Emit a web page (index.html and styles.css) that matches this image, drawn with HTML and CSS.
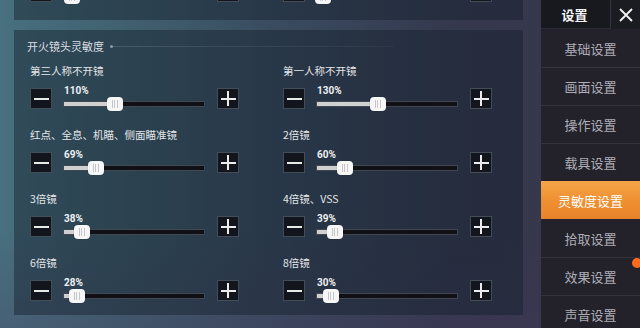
FILE: index.html
```html
<!DOCTYPE html>
<html lang="zh-CN">
<head>
<meta charset="utf-8">
<title>设置 - 灵敏度设置</title>
<link rel="stylesheet" href="styles.css">
</head>
<body>
<div class="screen">
  <main class="main">
    <section class="panel panel-prev">
      <div class="grid">
        <div class="cell">
          <div class="controls">
            <button class="btn"><span class="minus"></span></button>
            <div class="slider"><div class="track"><div class="fill" style="width:6%"></div><div class="thumb" style="left:6%"></div></div></div>
            <button class="btn"><span class="plus"></span></button>
          </div>
        </div>
        <div class="cell">
          <div class="controls">
            <button class="btn"><span class="minus"></span></button>
            <div class="slider"><div class="track"><div class="fill" style="width:4%"></div><div class="thumb" style="left:4%"></div></div></div>
            <button class="btn"><span class="plus"></span></button>
          </div>
        </div>
      </div>
    </section>

    <section class="panel panel-fire">
      <div class="title"><span class="title-text">开火镜头灵敏度</span><span class="rule"></span></div>
      <div class="grid">
        <div class="cell">
          <div class="label">第三人称不开镜</div>
          <div class="controls">
            <button class="btn"><span class="minus"></span></button>
            <div class="slider"><div class="pct">110%</div><div class="track"><div class="fill" style="width:36.7%"></div><div class="thumb" style="left:36.7%"></div></div></div>
            <button class="btn"><span class="plus"></span></button>
          </div>
        </div>
        <div class="cell">
          <div class="label">第一人称不开镜</div>
          <div class="controls">
            <button class="btn"><span class="minus"></span></button>
            <div class="slider"><div class="pct">130%</div><div class="track"><div class="fill" style="width:43.3%"></div><div class="thumb" style="left:43.3%"></div></div></div>
            <button class="btn"><span class="plus"></span></button>
          </div>
        </div>
        <div class="cell">
          <div class="label">红点、全息、机瞄、侧面瞄准镜</div>
          <div class="controls">
            <button class="btn"><span class="minus"></span></button>
            <div class="slider"><div class="pct">69%</div><div class="track"><div class="fill" style="width:23%"></div><div class="thumb" style="left:23%"></div></div></div>
            <button class="btn"><span class="plus"></span></button>
          </div>
        </div>
        <div class="cell">
          <div class="label">2倍镜</div>
          <div class="controls">
            <button class="btn"><span class="minus"></span></button>
            <div class="slider"><div class="pct">60%</div><div class="track"><div class="fill" style="width:20%"></div><div class="thumb" style="left:20%"></div></div></div>
            <button class="btn"><span class="plus"></span></button>
          </div>
        </div>
        <div class="cell">
          <div class="label">3倍镜</div>
          <div class="controls">
            <button class="btn"><span class="minus"></span></button>
            <div class="slider"><div class="pct">38%</div><div class="track"><div class="fill" style="width:12.7%"></div><div class="thumb" style="left:12.7%"></div></div></div>
            <button class="btn"><span class="plus"></span></button>
          </div>
        </div>
        <div class="cell">
          <div class="label">4倍镜、VSS</div>
          <div class="controls">
            <button class="btn"><span class="minus"></span></button>
            <div class="slider"><div class="pct">39%</div><div class="track"><div class="fill" style="width:13%"></div><div class="thumb" style="left:13%"></div></div></div>
            <button class="btn"><span class="plus"></span></button>
          </div>
        </div>
        <div class="cell">
          <div class="label">6倍镜</div>
          <div class="controls">
            <button class="btn"><span class="minus"></span></button>
            <div class="slider"><div class="pct">28%</div><div class="track"><div class="fill" style="width:9.3%"></div><div class="thumb" style="left:9.3%"></div></div></div>
            <button class="btn"><span class="plus"></span></button>
          </div>
        </div>
        <div class="cell">
          <div class="label">8倍镜</div>
          <div class="controls">
            <button class="btn"><span class="minus"></span></button>
            <div class="slider"><div class="pct">30%</div><div class="track"><div class="fill" style="width:10%"></div><div class="thumb" style="left:10%"></div></div></div>
            <button class="btn"><span class="plus"></span></button>
          </div>
        </div>
      </div>
    </section>
  </main>

  <nav class="sidebar">
    <div class="side-head">
      <div class="side-title">设置</div>
      <button class="close" aria-label="关闭">
        <svg width="16" height="16" viewBox="0 0 16 16"><path d="M2 2 L14 14 M14 2 L2 14" stroke="#f2f2f2" stroke-width="1.8" fill="none"/></svg>
      </button>
    </div>
    <div class="side-item">基础设置</div>
    <div class="side-item">画面设置</div>
    <div class="side-item">操作设置</div>
    <div class="side-item">载具设置</div>
    <div class="side-item active">灵敏度设置</div>
    <div class="side-item">拾取设置</div>
    <div class="side-item">效果设置</div>
    <div class="side-item">声音设置</div>
    <span class="dot"></span>
  </nav>
</div>
</body>
</html>
```

FILE: styles.css
```css
* { box-sizing: border-box; }

html, body {
  margin: 0;
  padding: 0;
}

body {
  width: 640px;
  height: 328px;
  overflow: hidden;
  font-family: "Noto Sans CJK SC", "Noto Sans", sans-serif;
  background:
    linear-gradient(180deg, rgba(0,0,0,0) 70%, rgba(70,50,90,0.25) 100%),
    linear-gradient(90deg, #48707f 0%, #40606f 20%, #394a5e 45%, #35394e 70%, #37364a 100%);
}

.screen {
  display: flex;
  width: 640px;
  height: 328px;
}

.main {
  width: 541px;
  padding-left: 14px;
  display: flex;
  flex-direction: column;
  gap: 10px;
}

.panel {
  width: 509px;
  background: rgba(20, 30, 45, 0.45);
}

.panel-prev {
  height: 20px;
  overflow: hidden;
  display: flex;
  flex-direction: column;
  justify-content: flex-end;
  padding: 0 0 18px 16px;
}

.panel-fire {
  height: 285px;
  padding: 9px 0 0 16px;
}

.title {
  display: flex;
  align-items: center;
  height: 14px;
  margin-left: -3px;
  margin-bottom: 11px;
}

.title-text {
  font-size: 11px;
  line-height: 14px;
  color: #d9dde2;
  white-space: nowrap;
}

.rule {
  position: relative;
  width: 284px;
  height: 1px;
  margin-left: 6px;
  background: linear-gradient(90deg, rgba(255,255,255,0.12), rgba(255,255,255,0.03));
}

.rule::before {
  content: "";
  position: absolute;
  left: 0;
  top: -1px;
  width: 3px;
  height: 3px;
  border-radius: 50%;
  background: rgba(220,230,240,0.5);
}

.grid {
  display: grid;
  grid-template-columns: 253px 209px;
  row-gap: 19px;
}

.cell {
  display: flex;
  flex-direction: column;
}

.label {
  height: 14px;
  font-size: 10.5px;
  line-height: 14px;
  color: #e4e6e8;
  margin-bottom: 10px;
  white-space: nowrap;
}

.controls {
  display: flex;
  align-items: flex-start;
  height: 21px;
}

.btn {
  width: 22px;
  height: 21px;
  padding: 0;
  margin: 0;
  border: 1px solid #434d58;
  background: #12161c;
  display: flex;
  align-items: center;
  justify-content: center;
  flex: none;
}

.minus {
  display: block;
  width: 15px;
  height: 2px;
  background: #e8e8e8;
}

.plus {
  display: block;
  width: 15px;
  height: 15px;
  background:
    linear-gradient(#ececec, #ececec) center / 15px 2px no-repeat,
    linear-gradient(#ececec, #ececec) center / 2px 15px no-repeat;
}

.slider {
  width: 142px;
  margin: -2px 12px 0 11px;
  display: flex;
  flex-direction: column;
  flex: none;
}

.panel-prev .slider {
  margin-top: 0;
  padding-top: 13px;
}

.pct {
  height: 10px;
  font-family: Roboto, "Noto Sans", sans-serif;
  font-weight: 700;
  font-size: 10px;
  line-height: 10px;
  color: #eef0f2;
  margin-left: 1px;
  margin-bottom: 5px;
}

.track {
  position: relative;
  height: 6px;
  background: #0f1116;
  border: 1px solid rgba(110, 115, 125, 0.55);
}

.fill {
  height: 100%;
  background: #cfd0d2;
}

.thumb {
  position: absolute;
  top: -5px;
  width: 16px;
  height: 14px;
  margin-left: -8px;
  border-radius: 4px;
  background:
    linear-gradient(90deg, transparent 5px, #c4c6c9 5px, #c4c6c9 6px, transparent 6px, transparent 7.5px, #c4c6c9 7.5px, #c4c6c9 8.5px, transparent 8.5px, transparent 10px, #c4c6c9 10px, #c4c6c9 11px, transparent 11px) center / 16px 8px no-repeat,
    #f6f6f6;
  box-shadow: 0 0 1px rgba(0,0,0,0.4);
}

.sidebar {
  position: relative;
  width: 99px;
  display: flex;
  flex-direction: column;
  background: #23222b;
}

.side-head {
  display: flex;
  height: 29px;
  background: #18181f;
  border-bottom: 1px solid #2c2b35;
}

.side-title {
  flex: 1;
  display: flex;
  align-items: center;
  justify-content: center;
  font-size: 13px;
  font-weight: 700;
  color: #f3f3f3;
  padding-right: 2px;
}

.close {
  width: 30px;
  height: 29px;
  padding: 0;
  margin: 0;
  border: none;
  border-left: 1px solid #34333d;
  background: #1b1b22;
  display: flex;
  align-items: center;
  justify-content: center;
}

.side-item {
  height: 38px;
  flex: none;
  display: flex;
  align-items: center;
  justify-content: center;
  font-size: 13px;
  color: #aeadb6;
  border-top: 1px solid #34333e;
}

.side-head + .side-item {
  border-top: none;
}

.side-item.active {
  color: #ffffff;
  border-top: none;
  background: linear-gradient(180deg, #f4a548 0%, #ee8f30 55%, #e9832a 100%);
}

.side-item.active + .side-item {
  border-top: none;
}

.dot {
  position: absolute;
  left: 91px;
  top: 258px;
  width: 10px;
  height: 10px;
  border-radius: 50%;
  background: #ff6a1c;
}
```
